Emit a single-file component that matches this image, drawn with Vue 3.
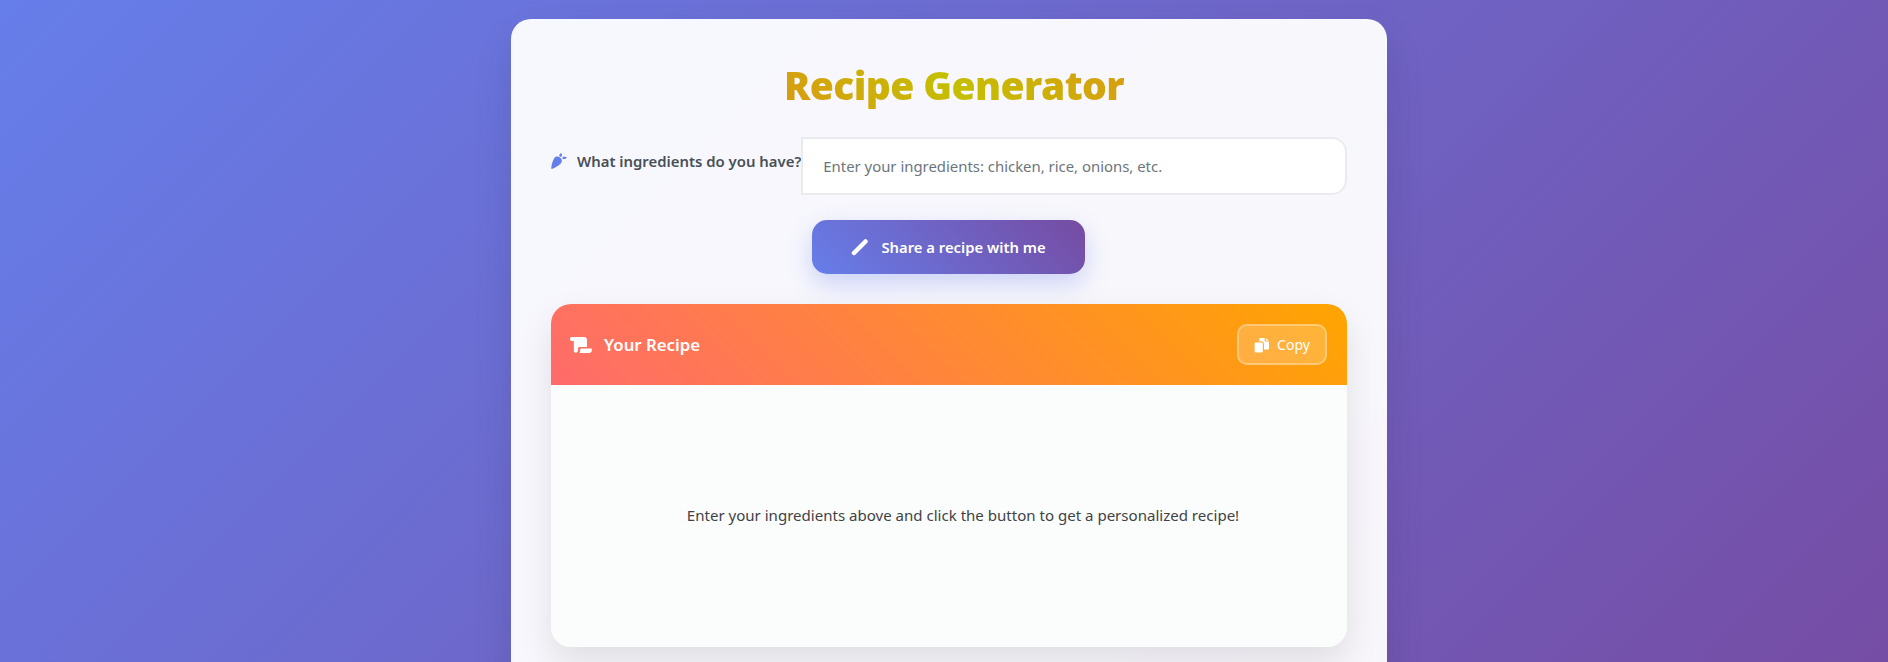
<template>
  <div class="page">
    <div class="card">
      <h1 class="title"><span class="title-text">Recipe Generator</span></h1>

      <div class="ingredients">
        <label class="ingredients-label" for="ingredients">
          <svg class="carrot" viewBox="0 0 16 16" aria-hidden="true">
            <path d="M0.2 15.8 C0.3 12.4 1.6 7.6 3.4 5 C4.8 3.2 7.6 3.2 9.4 4.8 C11.2 6.4 11.4 8.8 9.8 10.4 C7.6 12.6 3.6 15.4 0.2 15.8 Z" />
            <path d="M8.4 3.2 C8 2 8.6 0.8 10 0 C11 1 11.2 2.4 10.4 4 Z" />
            <path d="M11.4 6 C13 6.4 14.8 6 16 4.6 C14.8 3.6 13.2 3.4 11.6 4.2 Z" />
          </svg>
          What ingredients do you have?
        </label>
        <input
          id="ingredients"
          v-model="ingredients"
          class="ingredients-input"
          type="text"
          placeholder="Enter your ingredients: chicken, rice, onions, etc."
        />
      </div>

      <button class="generate" type="button">
        <svg class="pencil" viewBox="0 0 18 18" aria-hidden="true">
          <path d="M3 15 L14.5 3.5" />
        </svg>
        Share a recipe with me
      </button>

      <section class="recipe">
        <header class="recipe-header">
          <h2 class="recipe-title">
            <svg class="scroll" viewBox="0 0 22 16" aria-hidden="true">
              <path d="M1.5 0 H14 C16 0 17 1.2 17 3 V10 H9.5 C8.5 10 8 10.8 8 11.5 V13.3 C8 14.8 7 15.8 5.8 15.8 C4.6 15.8 3.8 14.8 3.8 13.5 V4 H1.5 C0.6 4 0 3 0 2 C0 0.9 0.6 0 1.5 0 Z" />
              <path d="M9.5 16 C10 15.4 10.2 14.5 10.2 13.6 V12 C10.2 11.6 10.5 11.4 10.9 11.4 H20.8 C21.4 11.4 22 11.8 22 12.5 V13 C22 14.8 20.6 16 19 16 Z" />
            </svg>
            Your Recipe
          </h2>
          <button class="copy" type="button">
            <svg class="copy-icon" viewBox="0 0 16 16" aria-hidden="true">
              <path d="M6.2 1 L10.6 1 L10.6 3.6 C10.6 4.1 11 4.5 11.5 4.5 L15 4.5 L15 11.4 C15 12 14.5 12.5 13.9 12.5 L10 12.5 L10 7 C10 5.6 9 4.4 7.4 4.2 L5.2 4.2 L5.2 2 C5.2 1.4 5.6 1 6.2 1 Z" />
              <path d="M11.8 1.2 L15 3.4 L11.8 3.4 Z" />
              <path d="M2 5.4 L7.4 5.4 C8.2 5.4 8.8 6 8.8 6.8 L8.8 14 C8.8 14.8 8.2 15.4 7.4 15.4 L2 15.4 C1.2 15.4 0.6 14.8 0.6 14 L0.6 6.8 C0.6 6 1.2 5.4 2 5.4 Z" />
            </svg>
            Copy
          </button>
        </header>
        <div class="recipe-body">
          <p class="recipe-empty">Enter your ingredients above and click the button to get a personalized recipe!</p>
        </div>
      </section>
    </div>
  </div>
</template>

<script setup>
import { ref } from 'vue';

const ingredients = ref('');
</script>

<style>
html,
body {
  height: 100%;
  overflow: hidden;
}
</style>

<style scoped>
.page {
  box-sizing: border-box;
  height: 662px;
  padding: 19px 0 0 10px;
  background: linear-gradient(135deg, #667eea 0%, #764ba2 100%) 0 0 / 100% 760px no-repeat;
  font-family: "Noto Sans", "Open Sans", sans-serif;
  overflow: hidden;
}

.card {
  box-sizing: border-box;
  width: 876px;
  height: 700px;
  margin: 0 auto;
  padding: 40px;
  background: rgba(255, 255, 255, 0.95);
  border-radius: 20px;
  box-shadow: 0 20px 40px rgba(0, 0, 0, 0.1);
}

.title {
  margin: 0 0 22px;
  padding-left: 10px;
  height: 56px;
  line-height: 52px;
  text-align: center;
  font-size: 39px;
  font-weight: 900;
  letter-spacing: -0.6px;
}

.title-text {
  display: inline-block;
  background: linear-gradient(45deg, #d99a12, #c4bf00, #d99a12);
  -webkit-background-clip: text;
  background-clip: text;
  color: transparent;
}

.ingredients {
  display: flex;
  align-items: flex-start;
}

.ingredients-label {
  display: flex;
  align-items: center;
  flex: 0 0 250px;
  gap: 10px;
  height: 47px;
  color: #495057;
  font-size: 14.9px;
  font-weight: 600;
  white-space: nowrap;
}

.carrot {
  flex: none;
  width: 16px;
  height: 16px;
  fill: #667eea;
}

.ingredients-input {
  box-sizing: border-box;
  flex: 1;
  min-width: 0;
  height: 58px;
  padding: 0 20px;
  border: 2px solid #e9ecef;
  border-radius: 0 15px 15px 0;
  background: #fff;
  font-family: inherit;
  font-size: 14.9px;
  outline: none;
}

.ingredients-input::placeholder {
  color: #6c757d;
  opacity: 1;
}

.generate {
  display: flex;
  align-items: center;
  justify-content: center;
  gap: 12px;
  width: 273px;
  height: 54px;
  margin: 25px 0 30px 261px;
  border: none;
  border-radius: 15px;
  background: linear-gradient(45deg, #667eea, #764ba2);
  box-shadow: 0 10px 25px rgba(102, 126, 234, 0.3);
  color: #fff;
  font-family: inherit;
  font-size: 14.8px;
  font-weight: 600;
}

.pencil {
  width: 18px;
  height: 18px;
  fill: none;
  stroke: #fff;
  stroke-width: 4.5;
  stroke-linecap: round;
}

.recipe {
  height: 343px;
  border-radius: 20px;
  overflow: hidden;
  box-shadow: 0 15px 35px rgba(0, 0, 0, 0.1);
}

.recipe-header {
  box-sizing: border-box;
  display: flex;
  align-items: center;
  justify-content: space-between;
  height: 81px;
  padding: 0 20px;
  background: linear-gradient(45deg, #ff6b6b, #ffa500);
  color: #fff;
}

.recipe-title {
  display: flex;
  align-items: center;
  gap: 12px;
  margin: 0 0 0 -1px;
  font-size: 16.8px;
  font-weight: 600;
}

.scroll {
  width: 22px;
  height: 16px;
  fill: #fff;
}

.copy {
  box-sizing: border-box;
  display: flex;
  align-items: center;
  justify-content: center;
  gap: 7px;
  width: 90px;
  height: 41px;
  border: 2px solid rgba(255, 255, 255, 0.3);
  border-radius: 10px;
  background: rgba(255, 255, 255, 0.2);
  color: #fff;
  font-family: inherit;
  font-size: 14px;
}

.copy-icon {
  width: 16px;
  height: 16px;
  fill: #fff;
}

.recipe-body {
  display: flex;
  align-items: center;
  justify-content: center;
  height: 260px;
  padding: 0 0 2px 28px;
  background: #fbfdfc;
}

.recipe-empty {
  margin: 0;
  color: #3f4346;
  font-size: 15.06px;
}
</style>
